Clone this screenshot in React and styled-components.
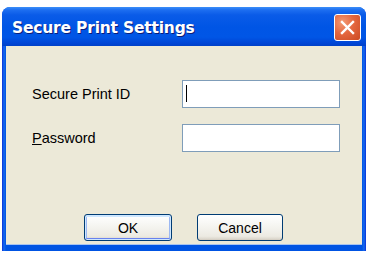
import React from "react";
import styled, { createGlobalStyle } from "styled-components";

const GlobalStyle = createGlobalStyle`
  html, body {
    margin: 0;
    padding: 0;
    background: #ffffff;
  }
`;

const App = () => {
  return (
    <>
      <GlobalStyle />
      <StlWindow>
        <StlTitleBar>
          <StlTitle>Secure Print Settings</StlTitle>
          <StlClose aria-label="Close">
            <svg width="15" height="15" viewBox="0 0 15 15">
              <path
                d="M2 2 L13 13 M13 2 L2 13"
                stroke="#ffffff"
                strokeWidth="2.4"
                strokeLinecap="square"
              />
            </svg>
          </StlClose>
        </StlTitleBar>
        <StlBody>
          <StlForm>
            <StlLabel>Secure Print ID</StlLabel>
            <StlField>
              <StlInput type="text" />
              <StlCaret />
            </StlField>
            <StlLabel>
              <u>P</u>assword
            </StlLabel>
            <StlField>
              <StlInput type="password" />
            </StlField>
          </StlForm>
          <StlButtons>
            <StlButton $default $width={88}>
              OK
            </StlButton>
            <StlButton $width={86}>Cancel</StlButton>
          </StlButtons>
        </StlBody>
      </StlWindow>
    </>
  );
};

const StlWindow = styled.div`
  margin: 7px 0 0 2px;
  width: 364px;
  height: 244px;
  display: flex;
  flex-direction: column;
  border-radius: 8px 8px 0 0;
  background: linear-gradient(to right, #0831d9 0, #166aee 2px, #0054e3 4px, #0054e3 360px, #166aee 362px, #0831d9 364px);
  overflow: hidden;
`;

const StlTitleBar = styled.div`
  height: 39px;
  flex: none;
  display: flex;
  align-items: center;
  justify-content: space-between;
  padding: 0 5px 0 10px;
  box-sizing: border-box;
  background: linear-gradient(
    to bottom,
    #3c8ff8 0,
    #1d6ef0 3px,
    #0a5be8 8px,
    #0055e5 20px,
    #0056e6 30px,
    #0046d6 36px,
    #0041c8 39px
  );
`;

const StlTitle = styled.span`
  font-family: "DejaVu Sans", sans-serif;
  font-weight: bold;
  font-size: 15.5px;
  color: #ffffff;
  text-shadow: 1px 1px 0 #0a1e7a;
  letter-spacing: -0.2px;
  padding-top: 2px;
`;

const StlClose = styled.div`
  width: 27px;
  height: 27px;
  box-sizing: border-box;
  border: 1px solid #ffffff;
  border-radius: 3px;
  margin-top: 2px;
  display: flex;
  align-items: center;
  justify-content: center;
  background: radial-gradient(circle at 30% 30%, #f39a74 0, #e4673f 45%, #cc4a22 100%);
`;

const StlBody = styled.div`
  flex: 1;
  margin: 0 4px 6px 4px;
  background: #ece9d8;
  display: flex;
  flex-direction: column;
  padding: 34px 0 0 26px;
  box-sizing: border-box;
  border-bottom: 1px solid #a8c4f0;
`;

const StlForm = styled.div`
  display: grid;
  grid-template-columns: 150px 158px;
  grid-auto-rows: 28px;
  row-gap: 16px;
  align-items: center;
`;

const StlLabel = styled.div`
  font-family: "Liberation Sans", Arial, sans-serif;
  font-size: 14.5px;
  color: #000000;
`;

const StlField = styled.div`
  position: relative;
  height: 28px;
`;

const StlInput = styled.input`
  width: 100%;
  height: 100%;
  box-sizing: border-box;
  border: 1px solid #7f9db9;
  background: #ffffff;
  outline: none;
  padding: 0 4px;
  font-family: "Liberation Sans", Arial, sans-serif;
  font-size: 14px;
`;

const StlCaret = styled.span`
  position: absolute;
  left: 4px;
  top: 5px;
  width: 1px;
  height: 17px;
  background: #000000;
`;

const StlButtons = styled.div`
  display: flex;
  gap: 25px;
  margin: 62px 0 0 52px;
`;

const StlButton = styled.div`
  width: ${(p) => p.$width}px;
  height: 27px;
  box-sizing: border-box;
  border: 1px solid #003c74;
  border-radius: 3px;
  display: flex;
  align-items: center;
  justify-content: center;
  font-family: "Liberation Sans", Arial, sans-serif;
  font-size: 14px;
  color: #000000;
  background: linear-gradient(to bottom, #ffffff 0, #f6f6f2 40%, #eceae2 85%, #d6d0c5 100%);
  box-shadow: ${(p) =>
    p.$default
      ? "inset 0 0 0 1px #cee7ff, inset 0 -2px 0 #6982ee, inset 0 2px 0 #cee7ff, inset 2px 0 0 #9cb8f2, inset -2px 0 0 #9cb8f2"
      : "inset 0 -1px 0 #d6d0c5"};
`;

export default App;
